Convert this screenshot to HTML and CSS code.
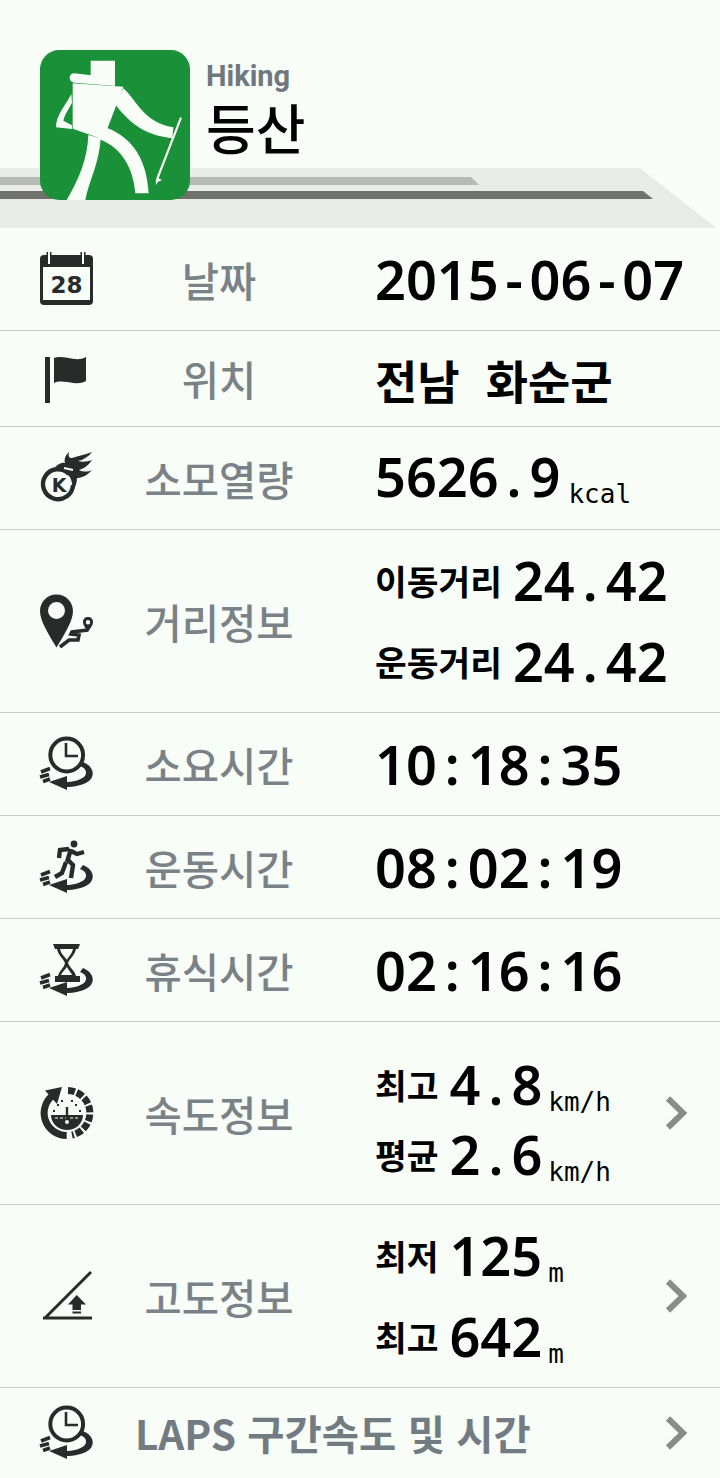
FILE: index.html
```html
<!DOCTYPE html>
<html lang="ko">
<head>
    <meta charset="UTF-8">
    <meta name="viewport" content="width=device-width, initial-scale=1.0">
    <title>등산</title>
    <link rel="stylesheet" href="styles.css">
</head>
<body>
    <svg class="defs" width="0" height="0">
        <symbol id="swirl" viewBox="0 0 60 60">
            <path d="M47 28 C57 32 60 41 53 47 C47 51 39 53 29 53 L29 48 C37 48 44 46 48 43 C52 39 50 34 44 32 Z" fill="#272c2b"/>
            <path d="M13 48 L31 42 L31 56 Z" fill="#272c2b"/>
            <path d="M5 38 L14 34.5 M4 43 L13 40.5 M7 47.5 L14 45" fill="none" stroke="#272c2b" stroke-width="3.6"/>
        </symbol>
        <symbol id="clock" viewBox="0 0 60 60">
            <use href="#swirl" width="60" height="60"/>
            <circle cx="30.7" cy="21" r="16.4" fill="#f8fdf8" stroke="#272c2b" stroke-width="4"/>
            <path d="M30 9 V22 H42" fill="none" stroke="#272c2b" stroke-width="2.6"/>
        </symbol>
        <symbol id="chevron" viewBox="0 0 30 40">
            <path d="M6 5.5 L21 20 L6 34.5" fill="none" stroke="#8a8c8a" stroke-width="6"/>
        </symbol>
    </svg>

    <header class="top">
        <svg class="road" viewBox="0 0 720 60" preserveAspectRatio="none">
            <path d="M0 0 H640 L716 60 H0 Z" fill="#e8ebe7"/>
            <path d="M0 9 H471 L479 17 H0 Z" fill="#b6b9b4"/>
            <path d="M0 23 H643 L653 31 H0 Z" fill="#6f716c"/>
        </svg>
        <svg class="logo" viewBox="120 60 450 450">
            <rect x="120" y="60" width="450" height="450" rx="58" fill="#1a9038"/>
            <g fill="#f8fdf8">
                <path d="M272 92 H345 V162 L272 136 Z"/>
                <path d="M222 130 L275 136 L345 155 V168 L225 158 C205 158 203 132 222 130 Z"/>
                <path d="M218 160 L370 170 L322 296 L300 325 L218 296 Z"/>
                <path d="M214 192 C195 230 168 255 168 292 L216 297 L216 286 L190 272 C195 250 208 235 216 218 Z"/>
                <path d="M370 175 C410 210 430 278 520 292 L517 325 C430 315 385 275 345 222 Z"/>
                <path d="M265 315 L302 325 C298 400 268 450 256 510 H200 C235 450 262 390 265 315 Z"/>
                <path d="M298 320 L322 294 C400 325 440 390 446 490 H406 C400 420 370 355 298 328 Z"/>
                <path d="M540 262 L546 264 L476 445 L486 450 L473 456 L469 466 L467 456 L470 442 Z"/>
            </g>
        </svg>
        <div class="title">
            <span class="title-en">Hiking</span>
            <span class="title-ko">등산</span>
        </div>
    </header>

    <div class="row h103">
        <svg class="icon" viewBox="0 0 60 60">
            <rect x="4" y="6" width="53" height="50" rx="4" fill="#272c2b"/>
            <rect x="7" y="18" width="47" height="33" fill="#f8fdf8"/>
            <path d="M13 3 V15 M47 3 V15" stroke="#272c2b" stroke-width="5"/>
            <path d="M13 3 V15 M47 3 V15" stroke="#f8fdf8" stroke-width="2"/>
            <text x="30.5" y="43.5" class="cal-num">28</text>
        </svg>
        <span class="label">날짜</span>
        <div class="value num">2015<span class="sep">-</span>06<span class="sep">-</span>07</div>
    </div>

    <div class="row h96">
        <svg class="icon" viewBox="0 0 60 60">
            <rect x="9" y="8" width="5" height="46" fill="#272c2b"/>
            <path d="M18 9 C27 5 40 14 50 8 V32 C40 38 27 29 18 34 Z" fill="#272c2b"/>
        </svg>
        <span class="label">위치</span>
        <div class="value place">전남<span class="gap"></span>화순군</div>
    </div>

    <div class="row h103">
        <svg class="icon" viewBox="0 0 60 60">
            <path d="M33 26 A15 15 0 1 0 37 37" fill="none" stroke="#272c2b" stroke-width="4.4"/>
            <text x="23" y="43.5" class="fire-k">K</text>
            <path d="M17 22 C21 16 26 14 29 15 C28 11 29 8 33 4 C32 8 33 10 36 10 C41 8 48 7 56 4 C52 9 47 12 42 13 C46 14 51 14 56 12 C52 18 47 21 43 22 C47 24 52 24 56 22 C51 28 45 30 41 30 C41 35 39 40 36 44 C37 38 36 32 33 28 C29 24 24 21 17 22 Z" fill="#272c2b"/>
            <path d="M28 20 L37 22" stroke="#f8fdf8" stroke-width="1.8"/>
        </svg>
        <span class="label">소모열량</span>
        <div class="value num">5626<span class="sep">.</span>9<span class="unit unit-low">kcal</span></div>
    </div>

    <div class="row h183">
        <svg class="icon" viewBox="0 0 60 60">
            <path fill-rule="evenodd" d="M20.5 3.5 C30 3.5 37 11 37 20 C37 30 28 44 20.5 56.5 C13 44 4 30 4 20 C4 11 11 3.5 20.5 3.5 Z M20.5 11 A8.5 8.5 0 1 0 20.5 28 A8.5 8.5 0 1 0 20.5 11 Z" fill="#272c2b"/>
            <path d="M24 56 L33 49 L42 49 L43 44 L35 43 L36 41 L52 39" fill="none" stroke="#272c2b" stroke-width="3.6"/>
            <path fill-rule="evenodd" d="M52 26 C55 26 57 28 57 31 C57 34 54 38 52 41 C50 38 47 34 47 31 C47 28 49 26 52 26 Z M52 29 A2.2 2.2 0 1 0 52 33.4 A2.2 2.2 0 1 0 52 29 Z" fill="#272c2b"/>
        </svg>
        <span class="label">거리정보</span>
        <div class="value pairs">
            <div class="pair"><span class="sub">이동거리</span><span class="num">24<span class="sep">.</span>42</span></div>
            <div class="pair"><span class="sub">운동거리</span><span class="num">24<span class="sep">.</span>42</span></div>
        </div>
    </div>

    <div class="row h103">
        <svg class="icon" viewBox="0 0 60 60"><use href="#clock" width="60" height="60"/></svg>
        <span class="label">소요시간</span>
        <div class="value num">10<span class="sep">:</span>18<span class="sep">:</span>35</div>
    </div>

    <div class="row h103">
        <svg class="icon" viewBox="0 0 60 60">
            <use href="#swirl" width="60" height="60"/>
            <circle cx="38" cy="7" r="3.4" fill="#272c2b"/>
            <path d="M35 12 L31 25 M35 14 L41 17 L48 15 M33 12 L24 13 L23 21 M32 23 L37 28 L35 41 M30 25 L26 36 L19 40" fill="none" stroke="#272c2b" stroke-width="4.4"/>
        </svg>
        <span class="label">운동시간</span>
        <div class="value num">08<span class="sep">:</span>02<span class="sep">:</span>19</div>
    </div>

    <div class="row h103">
        <svg class="icon" viewBox="0 0 60 60">
            <use href="#swirl" width="60" height="60"/>
            <path d="M17 4 H44 L42 9 L40 9 C39 15 34 18 32 23 C34 28 39 31 40 36 L44 36 V42 H19 V36 L22 36 C23 31 28 28 29 23 C27 18 22 15 21 9 L19 9 Z" fill="#272c2b"/>
            <path d="M24 9 H37 C36 14 32 17 31 20 C29 17 25 14 24 9 Z M31 27 C29 30 26 32 25 35 H36 C35 32 32 30 31 27 Z" fill="#f8fdf8"/>
        </svg>
        <span class="label">휴식시간</span>
        <div class="value num">02<span class="sep">:</span>16<span class="sep">:</span>16</div>
    </div>

    <div class="row h183">
        <svg class="icon" viewBox="0 0 60 60">
            <path d="M30.7 52.5 A22.5 22.5 0 0 1 18 11.4" fill="none" stroke="#272c2b" stroke-width="7"/>
            <path d="M9 7.5 L26 4 L21 21 Z" fill="#272c2b"/>
            <path d="M32 7.5 A22.5 22.5 0 0 1 36 52" fill="none" stroke="#272c2b" stroke-width="7" stroke-dasharray="7 2"/>
            <path d="M15 32 H47 C47 41 39 47 31 47 C23 47 15 41 15 32 Z" fill="#272c2b"/>
            <path d="M19 35 H43" stroke="#f8fdf8" stroke-width="1.2" stroke-dasharray="3 2"/>
            <path d="M31 24 V38" stroke="#272c2b" stroke-width="2.4"/>
            <path d="M18 29 V27 M22 23 V21 M26 19 V17 M36 19 V17 M40 23 V21 M44 29 V27" stroke="#272c2b" stroke-width="2"/>
            <circle cx="31" cy="39" r="2" fill="#f8fdf8"/>
        </svg>
        <span class="label">속도정보</span>
        <div class="value pairs pairs-tight">
            <div class="pair"><span class="sub">최고</span><span class="num">4<span class="sep">.</span>8</span><span class="unit">km/h</span></div>
            <div class="pair"><span class="sub">평균</span><span class="num">2<span class="sep">.</span>6</span><span class="unit">km/h</span></div>
        </div>
        <svg class="chevron"><use href="#chevron" width="30" height="40"/></svg>
    </div>

    <div class="row h183">
        <svg class="icon" viewBox="0 0 60 60">
            <path d="M55 6 L9 52 M7 52 H56" fill="none" stroke="#272c2b" stroke-width="3"/>
            <path d="M40.7 29 L50 38.5 H45 V44 H36.5 V38.5 H32 Z" fill="#272c2b"/>
            <rect x="36.5" y="45.5" width="8.5" height="2" fill="#272c2b"/>
        </svg>
        <span class="label">고도정보</span>
        <div class="value pairs">
            <div class="pair"><span class="sub">최저</span><span class="num">125</span><span class="unit">m</span></div>
            <div class="pair"><span class="sub">최고</span><span class="num">642</span><span class="unit">m</span></div>
        </div>
        <svg class="chevron"><use href="#chevron" width="30" height="40"/></svg>
    </div>

    <div class="row h90 row-laps">
        <svg class="icon" viewBox="0 0 60 60"><use href="#clock" width="60" height="60"/></svg>
        <span class="label label-laps">LAPS 구간속도 및 시간</span>
        <svg class="chevron"><use href="#chevron" width="30" height="40"/></svg>
    </div>
</body>
</html>
```

FILE: styles.css
```css
body {
    margin: 0;
    background: #f8fdf8;
    font-family: 'Noto Sans CJK KR', 'Noto Sans', sans-serif;
    color: #000;
    overflow: hidden;
}
.defs {
    position: absolute;
}

/* header */
.top {
    position: relative;
    height: 228px;
    display: flex;
    align-items: flex-start;
    padding: 50px 0 0 40px;
    box-sizing: border-box;
}
.road {
    position: absolute;
    left: 0;
    top: 168px;
    width: 720px;
    height: 60px;
}
.logo {
    position: relative;
    width: 150px;
    height: 150px;
    flex: none;
}
.title {
    position: relative;
    display: flex;
    flex-direction: column;
    margin-left: 16px;
}
.title-en {
    font-family: 'Roboto', sans-serif;
    font-weight: 700;
    font-size: 29px;
    line-height: 34px;
    margin-top: 9px;
    color: #6f7780;
}
.title-ko {
    font-weight: 500;
    font-size: 54px;
    line-height: 56px;
    margin-top: 6px;
}

/* rows */
.row {
    position: relative;
    display: grid;
    grid-template-columns: 36px 60px 236px 43px 1fr;
    align-items: center;
    border-bottom: 1px solid #c8cbc7;
    box-sizing: border-box;
}
.h90 { height: 91px; }
.h96 { height: 96px; }
.h103 { height: 103px; }
.h183 { height: 183px; }

.icon {
    grid-column: 2;
    width: 60px;
    height: 60px;
}
.label {
    grid-column: 3;
    text-align: center;
    font-weight: 500;
    font-size: 40.5px;
    color: #7b8287;
    margin-left: 10px;
}
.value {
    grid-column: 5;
}
.num {
    font-family: 'Noto Sans', sans-serif;
    font-weight: 600;
    font-size: 54px;
    line-height: 1;
}
.sep {
    display: inline-block;
    width: 31px;
    text-align: center;
}
.place {
    font-weight: 700;
    font-size: 46px;
}
.gap {
    display: inline-block;
    width: 26px;
}
.unit {
    font-family: 'DejaVu Sans Mono', monospace;
    font-weight: 400;
    font-size: 26px;
    line-height: 1;
    margin-left: 6px;
    vertical-align: -6px;
}
.unit-low {
    margin-left: 8px;
}
.pair {
    height: 81px;
    line-height: 81px;
    font-size: 48px;
    white-space: nowrap;
}
.pairs-tight {
    padding-top: 12px;
}
.pairs-tight .pair {
    height: 70px;
    line-height: 70px;
}
.sub {
    font-weight: 700;
    font-size: 34.5px;
    line-height: 1;
    margin-right: 11px;
    vertical-align: 6px;
}
.chevron {
    position: absolute;
    right: 28px;
    top: 50%;
    width: 30px;
    height: 40px;
    margin-top: -20px;
}
.row-laps {
    grid-template-columns: 36px 60px 1fr;
}
.label-laps {
    font-weight: 700;
    font-size: 40.5px;
    line-height: 1.2;
    text-align: left;
    margin-left: 39px;
    white-space: nowrap;
    color: #737b82;
}
.cal-num {
    font-family: 'DejaVu Sans', sans-serif;
    font-weight: 700;
    font-size: 23px;
    text-anchor: middle;
    fill: #272c2b;
}
.fire-k {
    font-family: 'DejaVu Sans', sans-serif;
    font-weight: 700;
    font-size: 19px;
    text-anchor: middle;
    fill: #272c2b;
}
```
